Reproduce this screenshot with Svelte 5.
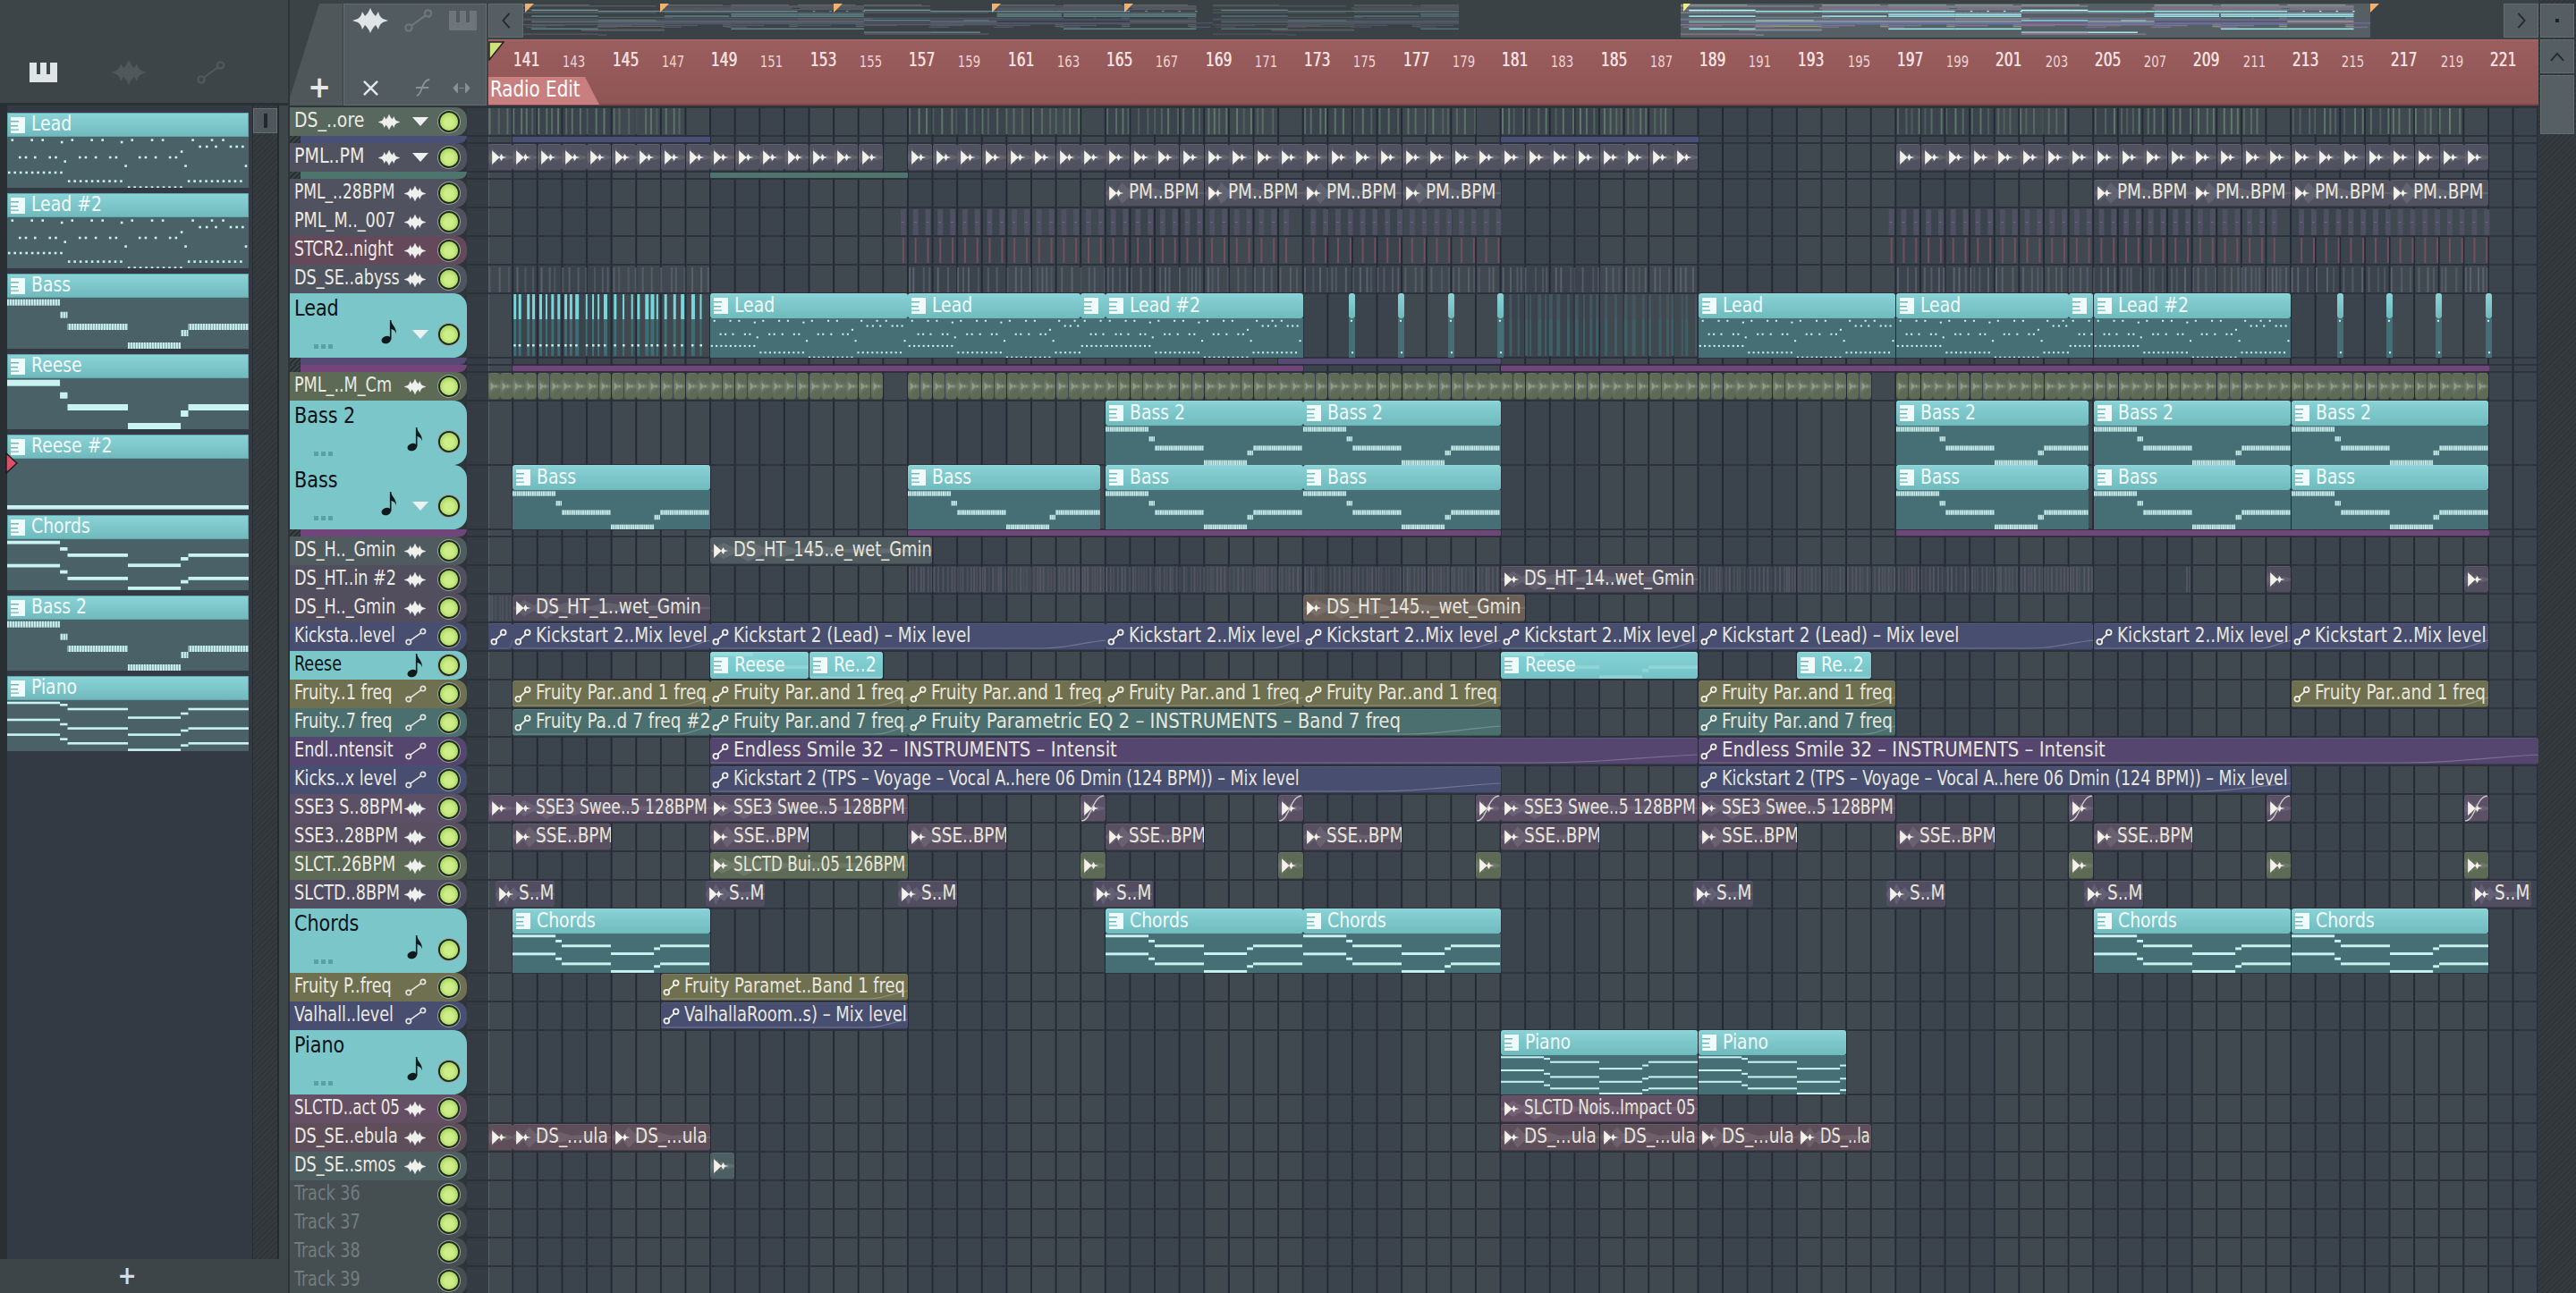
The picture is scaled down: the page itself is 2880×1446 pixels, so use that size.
<script>
  const BW = 27.62;
  const OX = 23.6;
  const bx = (b) => OX + (b - 140) * BW;
  const TEAL = '#7bc6c9';
  const range = (s, e, step = 1) => { const o = []; for (let b = s; b < e - 0.001; b += step) o.push(b); return o; };

  const seg = [[0,7],[7,8],[8,16],[16,23],[23,24],[24,32]];
  const U = 270 / 32;
  function layer(ys, h, kind) { return seg.map((s, i) => ({ x: s[0]*U, w: (s[1]-s[0])*U, y: ys[i], h, kind })); }
  const bassN = layer([1.7,15.7,29,50,36,29], 7, 'st');
  const reeseN = layer([1.7,15.7,29,50,36,29], 7, 'so');
  const chordN = [...layer([1.7,9,16,27.3,20,16],3.8,'so'), ...layer([27.7,34.7,42,53,45.7,42],3.8,'so')];
  const pianoN = [...layer([1.7,4,8.7,18.3,13.7,8.7],2.6,'so'), ...layer([20.7,25.7,30.3,37.3,32.7,30.3],2.6,'so'), ...layer([37.3,42.3,47,54.3,49.3,47],2.6,'so')];
  const dotRows = [
    [2.3,[28,77,104,178,227,254,328,378,405,480,528,556]],[4.7,[152,302]],[9.7,[498,515,538,575,590,605]],[15.3,[452]],
    [21.7,[47,62,85,122,137,197,212,237,273,288,347,362,387,423,438]],[26.3,[160]],[31.3,[312,462,613]],
    [38.7,range(20,160,14.5)],[48.3,[...range(170,310,14.5),...range(470,612,14.5)]],[55.3,range(320,460,14.5)]
  ];
  const leadN = dotRows.flatMap(([y, xs]) => xs.map((x) => ({ x: x/2.24-8, w: 2.6, y, h: 2.6, kind: 'so' })));
  const NOTES = { 'Lead': leadN, 'Lead #2': leadN, 'Bass': bassN, 'Bass 2': bassN, 'Reese': reeseN,
    'Reese #2': [{ x: 0, w: 270, y: 52, h: 4.5, kind: 'so' }], 'Chords': chordN, 'Piano': pianoN };
  const PATS = ['Lead','Lead #2','Bass','Reese','Reese #2','Chords','Bass 2','Piano'];

  const c = (s, e, t = '', x = {}) => ({ s, e, t, ...x });
  const KS = 'Kickstart 2..Mix level', KL = 'Kickstart 2 (Lead) – Mix level', F1 = 'Fruity Par..and 1 freq', F7 = 'Fruity Par..and 7 freq';
  const KV = 'Kickstart 2 (TPS – Voyage – Vocal A..here 06 Dmin (124 BPM)) – Mix level', ES = 'Endless Smile 32 – INSTRUMENTS – Intensit';
  const FP = 'Fruity Parametric EQ 2 – INSTRUMENTS – Band 7 freq';
  const P = 'Bass';
  const small = (xs, x = {}) => xs.map((b) => c(b, b + 1, '', x));
  const SX = { [KV]: 0.945, [ES]: 1.07, [FP]: 1.075, 'SSE3 Swee..5 128BPM': 0.93, 'SLCTD Bui..05 126BPM': 0.91, 'DS_HT_145..e_wet_Gmin': 0.97,
    'DS_HT_14..wet_Gmin': 0.97, 'Fruity Paramet..Band 1 freq': 0.975, 'ValhallaRoom..s) – Mix level': 0.975, 'SLCTD Nois..Impact 05': 0.91, 'DS_..la': 0.88 };
  const HSX = { 'DS_..ore': 1.07, 'PML..PM': 1.08, 'SLCTD..act 05': 0.95, 'PML_..28BPM': 0.97, 'STCR2..night': 0.98, 'Kicksta..level': 0.97 };

  const GREY = '#50535f', BLUE = '#474e70', OLIVE = '#6e7050', TL = '#4b6f6f', PURP = '#54466f', MAUVE = '#584f60', GREEN = '#5d6a55';

  const tracks = [
    { n:'DS_..ore', i:'w', col:'#59685e', tri:1, k:'a', subs:[[{s:141,e:149,col:'#4a4f78'},{s:181,e:189,col:'#4a4f78'}]], clips:[], st:[{type:'green',runs:[[140,148],[157,164],[165,172],[173,180],[181,188],[197,204],[205,212],[213,220]]}] },
    { n:'PML..PM', i:'w', col:GREY, tri:1, k:'a', subs:[[{s:149,e:157,col:'#4d756d'}]], clips:[...range(140,156),...range(157,189),...range(197,221)].map((b)=>c(b,b+1)) },
    { n:'PML_..28BPM', i:'w', col:GREY, k:'a', clips:[165,169,173,177,205,209,213,217].map((b)=>c(b,b+4,'PM..BPM')) },
    { n:'PML_M.._007', i:'w', col:GREY, k:'a', clips:[], st:[{type:'slot',runs:[[156.7,172.3],[173.3,181],[196.7,212.3],[213.3,221]]}] },
    { n:'STCR2..night', i:'w', col:'#63495a', k:'a', clips:[], st:[{type:'red',runs:[[156.7,172.3],[173.3,181],[196.7,212.3],[213.3,221]]}] },
    { n:'DS_SE..abyss', i:'w', col:'#4f5560', k:'a', clips:[], st:[{type:'grey',runs:[[140,149],[157,189],[197,221]]}] },
    { n:'Lead', i:'n', col:TEAL, tall:1, tri:1, k:'p', subs:[[{s:172,e:181,col:'#544a73'}],[{s:141,e:173,col:'#74457a'},{s:181,e:197,col:'#74457a'},{s:197,e:221,col:'#74457a'}]],
      clips:[c(149,157,'Lead'),c(157,164,'Lead'),c(164,165,''),c(165,173,'Lead #2'),
        ...[174.85,176.85,178.85,180.85,214.85,216.85,218.85,220.85].map((b)=>c(b,b+0.27,'',{mini:1,pat:'Lead'})),
        c(189,197,'Lead'),c(197,204,'Lead'),c(204,205,''),c(205,213,'Lead #2')].map((x)=>({pat:'Lead',...x})),
      st:[{type:'lead',runs:[[141,149]]},{type:'leaddim',runs:[[181,189]]}] },
    { n:'PML_..M_Cm', i:'w', col:GREEN, k:'a', dim:1, clips:[...range(140,156,0.5),...range(157,196,0.5),...range(197,221,0.5)].map((b)=>c(b,b+0.5)) },
    { n:'Bass 2', i:'n', col:TEAL, tall:1, k:'p', clips:[c(165,173,'Bass 2'),c(173,181,'Bass 2'),c(197,204.8,'Bass 2'),c(205,213,'Bass 2'),c(213,221,'Bass 2')] },
    { n:'Bass', i:'n', col:TEAL, tall:1, tri:1, k:'p', subs:[[{s:157,e:181,col:'#70457a'},{s:197,e:221,col:'#70457a'}]], clips:[c(141,149,P),c(157,164.8,P),c(165,173,P),c(173,181,P),c(197,204.8,P),c(205,213,P),c(213,221,P)] },
    { n:'DS_H.._Gmin', i:'w', col:'#505b60', k:'a', clips:[c(149,158,'DS_HT_145..e_wet_Gmin')] },
    { n:'DS_HT..in #2', i:'w', col:'#514e5e', k:'a', clips:[c(181,189,'DS_HT_14..wet_Gmin'),c(212,213),c(220,221)], st:[{type:'mauve',runs:[[157,181],[189,205],[208.7,208.95]]}] },
    { n:'DS_H.._Gmin', i:'w', col:'#524e5e', k:'a', clips:[c(141,149,'DS_HT_1..wet_Gmin'),c(173,182,'DS_HT_145.._wet_Gmin',{col:'#6a6058'})], st:[{type:'mauve',runs:[[140,141]]}] },
    { n:'Kicksta..level', i:'l', col:BLUE, k:'l', clips:[c(140,141),c(141,149,KS),c(149,165,KL),c(165,173,KS),c(173,181,KS),c(181,189,KS),c(189,205,KL),c(205,213,KS),c(213,221,KS)] },
    { n:'Reese', i:'n', col:TEAL, k:'p', short:1, clips:[c(149,153,'Reese'),c(153,156,'Re..2'),c(181,189,'Reese'),c(193,196,'Re..2')] },
    { n:'Fruity..1 freq', i:'l', col:OLIVE, k:'l', clips:[141,149,157,165,173,189,213].map((b)=>c(b,b+8,F1)) },
    { n:'Fruity..7 freq', i:'l', col:TL, k:'l', clips:[c(141,149,'Fruity Pa..d 7 freq #2'),c(149,157,F7),c(157,181,FP),c(189,197,F7)] },
    { n:'Endl..ntensit', i:'l', col:PURP, k:'l', clips:[c(149,189,ES),c(189,223,ES)] },
    { n:'Kicks..x level', i:'l', col:BLUE, k:'l', clips:[c(149,181,KV),c(189,213,KV)] },
    { n:'SSE3 S..8BPM', i:'w', col:'#5b5066', k:'a', clips:[c(140,141),c(141,149,'SSE3 Swee..5 128BPM'),c(149,157,'SSE3 Swee..5 128BPM'),...small([164,172,180,204,212,220],{slash:1}),c(181,189,'SSE3 Swee..5 128BPM'),c(189,197,'SSE3 Swee..5 128BPM')] },
    { n:'SSE3..28BPM', i:'w', col:MAUVE, k:'a', clips:[141,149,157,165,173,181,189,197,205].map((b)=>c(b,b+4,'SSE..BPM')) },
    { n:'SLCT..26BPM', i:'w', col:GREEN, k:'a', clips:[c(149,157,'SLCTD Bui..05 126BPM'),...small([164,172,180,204,212,220])] },
    { n:'SLCTD..8BPM', i:'w', col:'#514e62', k:'a', clips:[140.3,148.8,156.6,164.5,188.8,196.6,204.6,220.3].map((b)=>c(b,b+2.42,'S..M')) },
    { n:'Chords', i:'n', col:TEAL, tall:1, k:'p', clips:[141,165,173,205,213].map((b)=>c(b,b+8,'Chords')) },
    { n:'Fruity P..freq', i:'l', col:OLIVE, k:'l', clips:[c(147,157,'Fruity Paramet..Band 1 freq')] },
    { n:'Valhall..level', i:'l', col:BLUE, k:'l', clips:[c(147,157,'ValhallaRoom..s) – Mix level')] },
    { n:'Piano', i:'n', col:TEAL, tall:1, k:'p', clips:[c(181,189,'Piano'),c(189,195,'Piano')] },
    { n:'SLCTD..act 05', i:'w', col:'#644f64', k:'a', clips:[c(181,189,'SLCTD Nois..Impact 05')] },
    { n:'DS_SE..ebula', i:'w', col:'#5d4e5a', k:'a', clips:[c(140,141),c(141,145,'DS_...ula'),c(145,149,'DS_...ula'),c(181,185,'DS_...ula'),c(185,189,'DS_...ula'),c(189,193,'DS_...ula'),c(193,196,'DS_..la')] },
    { n:'DS_SE..smos', i:'w', col:'#4e5f62', k:'a', clips:[c(149,150)] },
    { n:'Track 36', col:'#454e50', empty:1, clips:[] },
    { n:'Track 37', col:'#454e50', empty:1, clips:[] },
    { n:'Track 38', col:'#454e50', empty:1, clips:[] },
    { n:'Track 39', col:'#454e50', empty:1, clips:[] }
  ];

  let seed = 7;
  const rnd = () => { seed = (seed * 16807) % 2147483647; return (seed % 1000) / 1000; };
  function stripes(s) {
    const out = [];
    for (const [a, b] of s.runs) {
      const x1 = bx(b);
      if (s.type === 'slot' || s.type === 'red') {
        for (let v = a; v < b - 0.1; v += 0.5) {
          const x = bx(v);
          if (s.type === 'slot') { out.push({ x, y: 2, w: 6, h: 30, f: '#4f5062' }); out.push({ x: x + 1, y: 16, w: 3, h: 1, f: '#6b6d7c' }); }
          else out.push({ x: x + 2, y: 2, w: 2, h: 28, f: '#72505f' });
        }
        continue;
      }
      let x = bx(a) + 1;
      while (x < x1 - 1) {
        if (s.type === 'green') { out.push({ x, y: 1, w: 2, h: 29, f: '#637a6c', o: 0.45 + rnd() * 0.55 }); x += 5 + rnd() * 7; }
        else if (s.type === 'grey') { out.push({ x, y: 3, w: 2, h: 28, f: '#5e6672', o: 0.5 + rnd() * 0.4 }); x += 4 + rnd() * 8; }
        else if (s.type === 'mauve') { out.push({ x, y: 2, w: 2, h: 28, f: '#5a5968', o: 0.4 + rnd() * 0.5 }); x += 2.5 + rnd() * 3; }
        else {
          const w = 2 + Math.round(rnd() * 2);
          const dim = s.type === 'leaddim';
          if (x + w > x1 - 1) break;
          out.push({ x, y: 1, w, h: 28, f: dim ? '#44565f' : '#78d6d9' });
          out.push({ x, y: 29, w, h: 41, f: dim ? '#3f5f66' : '#3d6d72' });
          if (!dim) out.push({ x, y: 57, w: 2.5, h: 2.5, f: '#cfeeee' });
          x += w + 2 + rnd() * 7;
        }
      }
    }
    return out;
  }
  tracks.forEach((t) => { t.rects = (t.st || []).flatMap(stripes); });

  const MW = 9.29;
  let ty = 0;
  const mini = [];
  tracks.forEach((t) => {
    const h = t.tall ? 72 : 32;
    const y = 38 * ty / 1330;
    t.clips.forEach((cl) => {
      const col = t.k === 'p' ? (t.tall ? '#9beef0' : '#8ad0d2') : (t.n.startsWith('PML') ? '#7f8392' : lighten(cl.col || t.col));
      mini.push({ s: cl.s, e: cl.e, y: y + (t.k === 'p' && t.tall ? 1 : 0), col });
    });
    if (t.rects.length) (t.st || []).forEach((s) => s.runs.forEach(([a, b]) => mini.push({ s: a, e: b, y, col: lighten(t.col) })));
    ty += h + (t.subs ? t.subs.length * 8 : 0);
  });
  function lighten(hex) {
    const n = parseInt(hex.slice(1), 16);
    const f = (v) => Math.min(255, Math.round(v * 1.45));
    return `rgb(${f(n >> 16)},${f((n >> 8) & 255)},${f(n & 255)})`;
  }
  const markers = [2, 153, 347, 524, 672];
  const rulerBars = range(141, 222, 2);
</script>

{#snippet wave(cls)}
  <svg class={cls} viewBox="0 0 40 28" aria-hidden="true"><path d="M20 0C22 5 24 7 26 9C27 7 28 6 29 4C30 8 31 10 34 12L40 14L34 16C31 18 30 20 29 24C28 22 27 21 26 19C24 21 22 23 20 28C18 23 16 21 14 19C13 21 12 22 11 24C10 20 9 18 6 16L0 14L6 12C9 10 10 8 11 4C12 6 13 7 14 9C16 7 18 5 20 0Z" /></svg>
{/snippet}
{#snippet link(cls)}
  <svg class={cls} viewBox="0 0 32 26" aria-hidden="true"><circle cx="26.5" cy="5" r="3.6" /><circle cx="5" cy="21" r="3.6" /><path d="M23.5 7.4L8 18.6" /></svg>
{/snippet}
{#snippet piano(cls)}
  <svg class={cls} viewBox="0 0 31 22" aria-hidden="true"><path fill-rule="evenodd" d="M0 0H31V22H0ZM8 0V13H12V0ZM19 0V13H23V0Z" /></svg>
{/snippet}
{#snippet note(cls)}
  <svg class={cls} viewBox="0 0 20 30" aria-hidden="true"><ellipse cx="6.5" cy="24.5" rx="6" ry="4.6" transform="rotate(-20 6.5 24.5)" /><path d="M11 24V0H12.6C13 7 19.5 8 19 18C18.8 14 15.5 11.5 12.8 11V24Z" /></svg>
{/snippet}
{#snippet patIcon()}
  <svg class="pat-icon" viewBox="0 0 16 18" aria-hidden="true"><rect width="16" height="18" fill="#f2fbfb" /><path class="slit" d="M0 4H9V5.4H0ZM0 9H8V10.4H0ZM0 13.4H9V14.8H0Z" /></svg>
{/snippet}
{#snippet audioIcon(dim)}
  <svg class="clip-icon" class:dim viewBox="0 0 16 16" aria-hidden="true"><path d="M1 1L8.5 8L1 15ZM8 8L10.5 4.5L11.6 7.2L15.5 8L11.6 8.8L10.5 11.5Z" /></svg>
{/snippet}
{#snippet linkIcon()}
  <svg class="link-icon" viewBox="0 0 20 20" aria-hidden="true"><circle cx="15.5" cy="4.5" r="3" /><circle cx="4.5" cy="15.5" r="3" /><path d="M13.4 6.6L6.6 13.4" /></svg>
{/snippet}
{#snippet notes(name)}
  <svg class="notes" viewBox="0 0 270 57" preserveAspectRatio="none" aria-hidden="true">
    {#each NOTES[name] as n}
      <rect x={n.x} y={n.y} width={n.w} height={n.h} fill={n.kind === 'st' ? 'url(#noteStripe)' : '#c8f3f1'} />
    {/each}
  </svg>
{/snippet}

<div class="app">
  <svg class="defs" width="0" height="0" aria-hidden="true"><defs><pattern id="noteStripe" width="3" height="8" patternUnits="userSpaceOnUse"><rect width="3" height="8" fill="#7fa8aa" /><rect width="1.8" height="8" fill="#cdeeee" /></pattern></defs></svg>

  <aside class="left">
    <div class="left-top">
      <div class="left-tabs">
        {@render piano('ic-bright lt-p')}
        {@render wave('ic-faint lt-w')}
        {@render link('ic-faint-line lt-l')}
      </div>
    </div>
    <div class="browser">
      <div class="pat-list">
        {#each PATS as p}
          <div class="pat">
            <div class="pat-head">{@render patIcon()}<span>{p}</span></div>
            <div class="pat-body">{@render notes(p)}</div>
          </div>
        {/each}
        <svg class="marker" viewBox="0 0 14 24" aria-hidden="true"><path d="M1 1L13 12L1 23Z" /></svg>
      </div>
      <div class="left-scroll"><div class="left-thumb"><i></i></div></div>
      <div class="left-edge"></div>
    </div>
    <div class="left-bottom">+</div>
  </aside>

  <main class="main">
    <div class="top">
      <div class="tools">
        <div class="tab-add"><span>+</span></div>
        <div class="tool-panel">
          <div class="tool-row">
            {@render wave('ic-bright tb-w')}
            {@render link('ic-dim-line tb-l')}
            {@render piano('ic-dim tb-p')}
          </div>
          <div class="tool-row">
            <svg class="tb-x" viewBox="0 0 20 18" aria-hidden="true"><path d="M2 1L18 17M18 1L2 17" /></svg>
            <svg class="tb-f" viewBox="0 0 20 22" aria-hidden="true"><path d="M2 21C9 21 8 1 18 1M1 11H17" /></svg>
            <svg class="tb-a" viewBox="0 0 22 14" aria-hidden="true"><path d="M6 1L1 7L6 13ZM16 1L21 7L16 13ZM8 7H14" /></svg>
          </div>
        </div>
      </div>
      <div class="time">
        <div class="over">
          <button class="nav" aria-label="previous"><svg viewBox="0 0 12 20"><path d="M10 1L2 10L10 19" /></svg></button>
          <div class="minimap">
            <svg width="2216" height="38" aria-hidden="true">
              <g opacity="0.45">
                <svg x="0" y="0" width="1046" height="38">
                  {#each mini as m}
                    <rect x={(m.s - 140) * MW} y={m.y + 1} width={(m.e - m.s) * MW} height="1.3" fill={m.col} />
                    <rect x={(m.s - 57) * MW} y={m.y + 1} width={(m.e - m.s) * MW} height="1.3" fill={m.col} opacity="0.7" />
                  {/each}
                </svg>
              </g>
              <rect x="1294" y="0" width="771" height="38" fill="#565f63" />
              {#each mini as m}
                <rect x={1294 + (m.s - 140) * MW} y={m.y + 1} width={(m.e - m.s) * MW} height="1.5" fill={m.col} />
              {/each}
              {#each markers as x}<polygon points="{x},0 {x + 10},0 {x},10" fill="#f1b26f" />{/each}
              <polygon points="1297,0 1305,0 1297,9" fill="#f7e98e" />
              <polygon points="2065,0 2075,0 2065,10" fill="#f1b26f" />
            </svg>
          </div>
          <button class="nav" aria-label="next"><svg viewBox="0 0 12 20"><path d="M2 1L10 10L2 19" /></svg></button>
        </div>
        <div class="ruler">
          <svg class="start" viewBox="0 0 18 22" aria-hidden="true"><path d="M1 1H17L1 21Z" /></svg>
          {#each rulerBars as b}
            <span class="num" class:major={(b - 141) % 4 === 0} style="left:{(b - 140) * BW - 0.4}px">{b}</span>
          {/each}
          <div class="marker-tag"><span>Radio Edit</span></div>
        </div>
      </div>
    </div>

    <div class="body">
      <div class="heads">
        {#each tracks as t}
          <div class="track-wrap">
            <div class="head" class:tall={t.tall} class:teal={t.col === TEAL} class:empty={t.empty} style="background-color:{t.col}">
              <span class="name" style={t.tall ? '' : `transform:scaleX(${0.87 * (HSX[t.n] || 1)})`}>{t.n}</span>
              <div class="head-ctl">
                {#if t.tall}<i class="dots"><b></b><b></b><b></b></i>{/if}
                {#if t.i === 'w'}{@render wave('h-ic')}{/if}
                {#if t.i === 'l'}{@render link('h-link')}{/if}
                {#if t.i === 'n'}{@render note('h-note')}{/if}
                {#if t.tri}<i class="tri"></i>{/if}
                <i class="led"></i>
              </div>
            </div>
            {#each t.subs || [] as sub}
              <div class="sub-head"><i></i><b style="background-color:{sub[0].col}"></b></div>
            {/each}
          </div>
        {/each}
      </div>

      <div class="canvas">
        {#each tracks as t}
          <div class="lane" class:tall={t.tall}>
            {#if t.rects.length}
              <svg class="lane-st" width="2315" height={t.tall ? 72 : 32} aria-hidden="true">
                {#each t.rects as r}<rect x={r.x} y={r.y} width={r.w} height={r.h} fill={r.f} opacity={r.o ?? 1} />{/each}
              </svg>
            {/if}
            {#each t.clips as cl}
              {#if t.k === 'p'}
                <div class="clip-p" class:short={t.short} class:mini={cl.mini} style="left:{bx(cl.s)}px;width:{(cl.e - cl.s) * BW - 0.5}px">
                  <div class="clip-ph">
                    {#if t.short}<div class="clip-shade">{@render notes(cl.t === 'Reese' ? 'Reese' : 'Reese #2')}</div>{/if}
                    {#if !cl.mini}{@render patIcon()}<span>{cl.t}</span>{/if}
                  </div>
                  {#if !t.short}<div class="clip-pb"><div class="clip-pn" style="left:{cl.mini ? -84 : 0}px">{@render notes(cl.pat || t.n)}</div></div>{/if}
                </div>
              {:else}
                <div class="clip" class:auto={t.k === 'l'} class:tiny={(cl.e - cl.s) <= 0.5} style="left:{bx(cl.s)}px;width:{(cl.e - cl.s) * BW - 0.5}px;background-color:{cl.col || t.col}">
                  {#if t.k === 'a'}
                    <svg class="clip-wave" viewBox="0 0 100 30" preserveAspectRatio="none" aria-hidden="true"><path d="M0 15L6 6L11 12L17 3L24 11L31 7L39 13L48 9L60 13L75 12L100 14V16L75 18L60 17L48 21L39 17L31 23L24 19L17 27L11 18L6 24Z" /></svg>
                    {@render audioIcon(t.dim)}
                    {#if cl.slash}<svg class="clip-slash" viewBox="0 0 26 30" preserveAspectRatio="none" aria-hidden="true"><path d="M1 29C12 29 12 2 25 1" /></svg>{/if}
                  {:else}
                    <svg class="clip-curve" viewBox="0 0 100 30" preserveAspectRatio="none" aria-hidden="true"><path d="M0 28L84 28C90 28 94 22 100 19" /></svg>
                    {@render linkIcon()}
                  {/if}
                  {#if cl.t}<span style="transform:scaleX({0.91 * (SX[cl.t] || 1)})">{cl.t}</span>{/if}
                </div>
              {/if}
            {/each}
          </div>
          {#each t.subs || [] as sub}
            <div class="lane sub">
              {#each sub as s}<div class="bar" style="left:{bx(s.s)}px;width:{(s.e - s.s) * BW}px;background-color:{s.col}"></div>{/each}
            </div>
          {/each}
        {/each}
      </div>
    </div>
  </main>

  <div class="vscroll">
    <div class="vb"><i></i></div>
    <div class="vb"><svg viewBox="0 0 18 12"><path d="M1 11L9 2L17 11" /></svg></div>
    <div class="vthumb"></div>
  </div>
</div>

<style>
  :global(body) { margin: 0; background: #2e3439; }
  .defs { position: absolute; }
  .app {
    width: 2880px; height: 1446px; overflow: hidden; display: flex;
    font-family: "DejaVu Sans Condensed", "DejaVu Sans", sans-serif; font-stretch: condensed;
    font-size: 22.5px; color: #e8e6dc;
  }
  /* left */
  .left { width: 322px; flex: none; display: flex; flex-direction: column; background: #3d4548; margin-right: 2px; }
  .left-top { height: 118px; flex: none; display: flex; align-items: flex-end; background: #3d4548; border-bottom: 3px solid #2a3034; box-sizing: border-box; }
  .left-tabs { width: 100%; display: flex; align-items: center; height: 40px; margin-bottom: 14px; padding-left: 33px; box-sizing: border-box; }
  .left-tabs svg { flex: none; }
  .lt-p { width: 31px; height: 22px; }
  .lt-w { width: 40px; height: 28px; margin-left: 60px; }
  .lt-l { width: 32px; height: 26px; margin-left: 56px; }
  .browser { flex: 1; display: flex; min-height: 0; background: #2a2f33; padding-left: 8px; }
  .pat-list { position: relative; width: 270px; flex: none; background: #333a43; padding: 8px 0 0; display: flex; flex-direction: column; gap: 6px; box-shadow: 4px 0 0 #333a43; }
  .pat { height: 84px; display: flex; flex-direction: column; }
  .pat-head { height: 27px; flex: none; display: flex; align-items: center; gap: 7px; padding-left: 4px; box-sizing: border-box; color: #f2fbfb; background: linear-gradient(#8bd3d7, #6fb9bd); box-shadow: inset 0 0 0 1px #5fa8ac; line-height: 1; }
  .pat-head span, .clip-ph span { flex: none; display: inline-block; position: relative; padding-bottom: 2px; transform: scaleX(0.93); transform-origin: left center; }
  .pat-body { flex: 1; background: #4a6168; position: relative; }
  .notes { position: absolute; inset: 0; width: 100%; height: 100%; }
  .pat-icon { position: relative; width: 16px; height: 18px; flex: none; }
  .slit { fill: #6fb9bd; }
  .marker { position: absolute; left: -2px; top: 388px; width: 14px; height: 24px; }
  .marker path { fill: #d9506a; stroke: #1a1c22; stroke-width: 1.5; }
  .left-scroll { width: 28px; flex: none; margin-left: 4px; background: repeating-linear-gradient(135deg, #2f3538 0 2px, #353b3e 2px 4px); border-left: 1px solid #272c30; box-sizing: border-box; }
  .left-thumb { height: 28px; margin-top: 3px; background: #4e575b; border: 1px solid #666e72; box-sizing: border-box; display: flex; align-items: center; justify-content: center; }
  .left-thumb i { width: 4px; height: 16px; background: #22282c; }
  .left-edge { flex: 1; background: #3e4649; border-left: 2px solid #252a2e; }
  .left-bottom { height: 38px; flex: none; background: #3d4548; display: flex; align-items: center; justify-content: center; padding-right: 38px; font-size: 28px; font-weight: bold; color: #d8dde0; line-height: 1; }

  /* icons */
  .ic-bright { fill: #dfe4e6; }
  .ic-dim { fill: #6e7679; }
  .ic-faint { fill: #50585c; }
  .ic-faint-line { fill: none; stroke: #50585c; stroke-width: 2.4; }
  .ic-dim-line { fill: none; stroke: #6e7679; stroke-width: 2.4; }

  /* main */
  .main { width: 2514px; flex: none; display: flex; flex-direction: column; min-width: 0; }
  .top { height: 120px; flex: none; display: flex; background: #2e3439; }
  .tools { width: 222px; height: 118px; flex: none; display: flex; gap: 1px; padding-top: 4px; box-sizing: border-box; background: #3b4347; }
  .tab-add { width: 59px; flex: none; background: #4f575b; clip-path: polygon(33px 0, 100% 0, 100% 100%, 0 100%, 0 92%); display: flex; align-items: flex-end; justify-content: center; padding-bottom: 4px; box-sizing: border-box; }
  .tab-add span { font-size: 34px; font-weight: bold; color: #e4e8ea; line-height: 1; margin-left: 7px; }
  .tool-panel { width: 160px; flex: none; background: #525b5f; border: 1px solid #646c70; box-sizing: border-box; display: flex; flex-direction: column; justify-content: space-between; padding: 4px 0 8px; }
  .tool-row { display: flex; align-items: center; justify-content: space-between; padding: 0 10px 0 9px; }
  .tb-w { width: 40px; height: 28px; }
  .tb-l { width: 32px; height: 26px; }
  .tb-p { width: 31px; height: 22px; }
  .tb-x { width: 19px; height: 17px; margin-left: 11px; fill: none; stroke: #e4e8ea; stroke-width: 2.6; }
  .tb-f { width: 18px; height: 22px; fill: none; stroke: #8a9296; stroke-width: 2; margin-left: 16px; }
  .tb-a { width: 20px; height: 13px; fill: #8a9296; stroke: #8a9296; stroke-width: 1; margin-right: 7px; }
  .time { flex: 1; min-width: 0; display: flex; flex-direction: column; height: 118px; background: #3a4246; }
  .over { height: 44px; flex: none; display: flex; padding: 4px 0 2px; box-sizing: border-box; }
  .nav { width: 39px; height: 38px; flex: none; padding: 0; background: #555e62; border: 1px solid #646c70; display: flex; align-items: center; justify-content: center; }
  .nav svg { width: 12px; height: 18px; fill: none; stroke: #23292d; stroke-width: 2; }
  .minimap { flex: 1; overflow: hidden; min-width: 0; }
  .minimap svg { display: block; }
  .ruler { position: relative; height: 74px; flex: none; width: 2292px; background: linear-gradient(#a46566 0 1px, #9b5e5f 2px, #8f5455); box-shadow: inset 0 -2px 0 #7d4748; overflow: hidden; }
  .start { position: absolute; left: 0; top: 2px; width: 18px; height: 22px; }
  .start path { fill: #cde27c; stroke: #222; stroke-width: 1.5; }
  .num { position: absolute; top: 12px; font-size: 18px; line-height: 26px; color: #ecd2d2; padding-left: 1px; transform: scaleX(0.82); transform-origin: left center; }
  .num.major { top: 10px; font-size: 22px; color: #f5e0e0; transform: scaleX(0.78); text-shadow: 0.4px 0 0 #f5e0e0; }
  .marker-tag { position: absolute; left: 0; bottom: 1px; height: 31px; width: 124px; background: #c97f7f; clip-path: polygon(0 0, 108px 0, 100% 100%, 0 100%); color: #fff; font-size: 24px; line-height: 29px; padding-left: 2px; box-sizing: border-box; white-space: nowrap; }
  .marker-tag span { display: inline-block; transform: scaleX(0.92); transform-origin: left center; }

  /* body */
  .body { flex: 1; min-height: 0; display: flex; overflow: hidden; }
  .heads { width: 198px; flex: none; background: #2e3439; display: flex; flex-direction: column; }
  .track-wrap { display: flex; flex-direction: column; }
  .head { height: 32px; flex: none; display: flex; align-items: center; border-radius: 0 13px 13px 0; padding: 0 10px 0 5px; box-sizing: border-box; line-height: 1; color: #eceae2; }
  .head .name { padding-bottom: 3px; white-space: nowrap; flex: 1; min-width: 0; font-size: 22.5px; transform-origin: left center; }
  .head-ctl { display: flex; align-items: center; flex: none; }
  .head.teal { color: #0b1215; }
  .head.empty { color: #747c80; }
  .h-ic { width: 24px; height: 19px; margin-right: 16px; fill: #eef0ee; stroke: #eef0ee; stroke-width: 0.6; flex: none; }
  .h-link { width: 24px; height: 20px; margin-right: 15px; fill: none; stroke: #e6e6e0; stroke-width: 2.2; flex: none; }
  .h-note { width: 18px; height: 27px; margin-right: 19px; fill: #10191c; flex: none; }
  .tri { width: 0; height: 0; border-left: 9px solid transparent; border-right: 9px solid transparent; border-top: 10px solid #eef1f1; margin-right: 13px; margin-left: -2px; }
  .led { width: 20px; height: 20px; border-radius: 50%; flex: none; box-sizing: border-box; background: radial-gradient(circle at 50% 55%, #cfee8a 0 30%, #a6d75c 75%); box-shadow: 0 0 0 2px #1e2a18, 0 0 0 3px #9ca3a0; }
  .head.tall { height: 72px; display: block; padding: 3px 10px 10px 5px; position: relative; border-radius: 0 15px 15px 0; }
  .head.tall .name { display: block; color: #0b1215; font-size: 24px; padding: 0; line-height: 28px; transform: scaleX(0.96); }
  .head.tall .head-ctl { position: absolute; left: 5px; right: 10px; bottom: 10px; justify-content: flex-end; }
  .head.tall .h-note { margin-right: 19px; margin-bottom: 5px; }
  .dots { display: flex; gap: 3px; margin-right: auto; margin-left: 22px; align-self: flex-end; }
  .dots b { width: 5px; height: 5px; background: #5d9ea2; display: block; }
  .sub-head { height: 8px; display: flex; flex: none; background: #2a2f33; }
  .sub-head i { width: 12px; flex: none; background: repeating-linear-gradient(135deg, #2a2f33 0 2px, #3a4144 2px 4px); }
  .sub-head b { flex: 1; border-radius: 0 0 10px 0; }

  .canvas {
    width: 2315px; flex: none; display: flex; flex-direction: column; position: relative;
    background-color: #3b434c;
    background-image:
      linear-gradient(90deg, #343b42 24px, #59616a 24px, #59616a 25px, transparent 25px),
      linear-gradient(90deg, #232a36 2px, transparent 2px),
      linear-gradient(90deg, transparent 50%, #404850 50%);
    background-size: 100% 100%, 27.62px 100%, 220.96px 100%;
    background-position: 0 0, 22.6px 0, 51.2px 0;
    background-repeat: no-repeat, repeat, repeat;
  }
  .lane { position: relative; height: 32px; flex: none; }
  .lane::after { content: ""; position: absolute; left: 0; right: 0; top: -1px; height: 2px; background: #2a303b; pointer-events: none; opacity: 0.85; }
  .lane.tall { height: 72px; }
  .lane.sub { height: 8px; }
  .lane-st { position: absolute; left: 0; top: 0; }
  .bar { position: absolute; top: 1px; height: 6px; border-radius: 1px; z-index: 2; }

  .clip { position: absolute; z-index: 2; top: 1px; height: 30px; border-radius: 3px; display: flex; align-items: center; box-sizing: border-box; overflow: hidden; line-height: 1; color: #e8e6dc; box-shadow: inset 0 1px 0 rgba(255,255,255,0.07), inset 0 -1px 0 rgba(0,0,0,0.2); white-space: nowrap; }
  .clip span { position: relative; flex: none; display: inline-block; padding-bottom: 3px; margin-left: 3px; font-size: 22.5px; transform-origin: left center; }
  .clip-wave { position: absolute; inset: 0; width: 100%; height: 100%; fill: rgba(255,255,255,0.1); }
  .clip-icon { position: relative; width: 18px; height: 18px; margin-left: 3px; margin-right: 2px; fill: #f3f1ea; flex: none; }
  .clip-icon.dim { fill: #8e9d88; }
  .clip-curve { position: absolute; inset: 0; width: 100%; height: 100%; fill: none; stroke: rgba(255,255,255,0.22); stroke-width: 1; vector-effect: non-scaling-stroke; }
  .clip-slash { position: absolute; inset: 0; width: 100%; height: 100%; fill: none; stroke: #c9c7c4; stroke-width: 1.4; }
  .link-icon { position: relative; width: 19px; height: 19px; margin-left: 2px; margin-right: 2px; flex: none; fill: none; stroke: #f0efe6; stroke-width: 1.9; }
  .clip.tiny { border-radius: 4px; }
  .clip.tiny .clip-icon { width: 10px; height: 14px; margin-left: 2px; margin-right: 0; }

  .clip-p { position: absolute; z-index: 2; top: 0; bottom: 0; display: flex; flex-direction: column; overflow: hidden; color: #f2fbfb; }
  .clip-ph { height: 28px; flex: none; display: flex; align-items: center; gap: 7px; padding-left: 4px; box-sizing: border-box; border-radius: 3px; background: linear-gradient(#8ad3d6, #6fbabd); box-shadow: inset 0 1px 0 rgba(255,255,255,0.15); line-height: 1; white-space: nowrap; overflow: hidden; position: relative; }
  .clip-shade { position: absolute; left: 0; top: 0; bottom: 0; width: 220px; opacity: 0.28; }
  .clip-pb { flex: 1; position: relative; overflow: hidden; background: #456f74; }
  .clip-pn { position: absolute; top: 0; bottom: 0; width: 220px; }
  .clip-p.short .clip-ph { height: 30px; margin-top: 1px; background: linear-gradient(#85d3d6, #74c2c6); }

  /* scrollbar */
  .vscroll { width: 42px; flex: none; display: flex; flex-direction: column; gap: 2px; padding: 4px 2px 0; box-sizing: border-box; background: repeating-linear-gradient(135deg, #2f3538 0 2px, #353b3e 2px 4px); }
  .vb { height: 38px; flex: none; background: #555e62; border: 1px solid #646c70; box-sizing: border-box; display: flex; align-items: center; justify-content: center; }
  .vb i { width: 4px; height: 4px; background: #1d2226; }
  .vb svg { width: 16px; height: 11px; fill: none; stroke: #23292d; stroke-width: 2; }
  .vthumb { height: 66px; flex: none; background: #565f63; border: 1px solid #646c70; box-sizing: border-box; }
</style>
